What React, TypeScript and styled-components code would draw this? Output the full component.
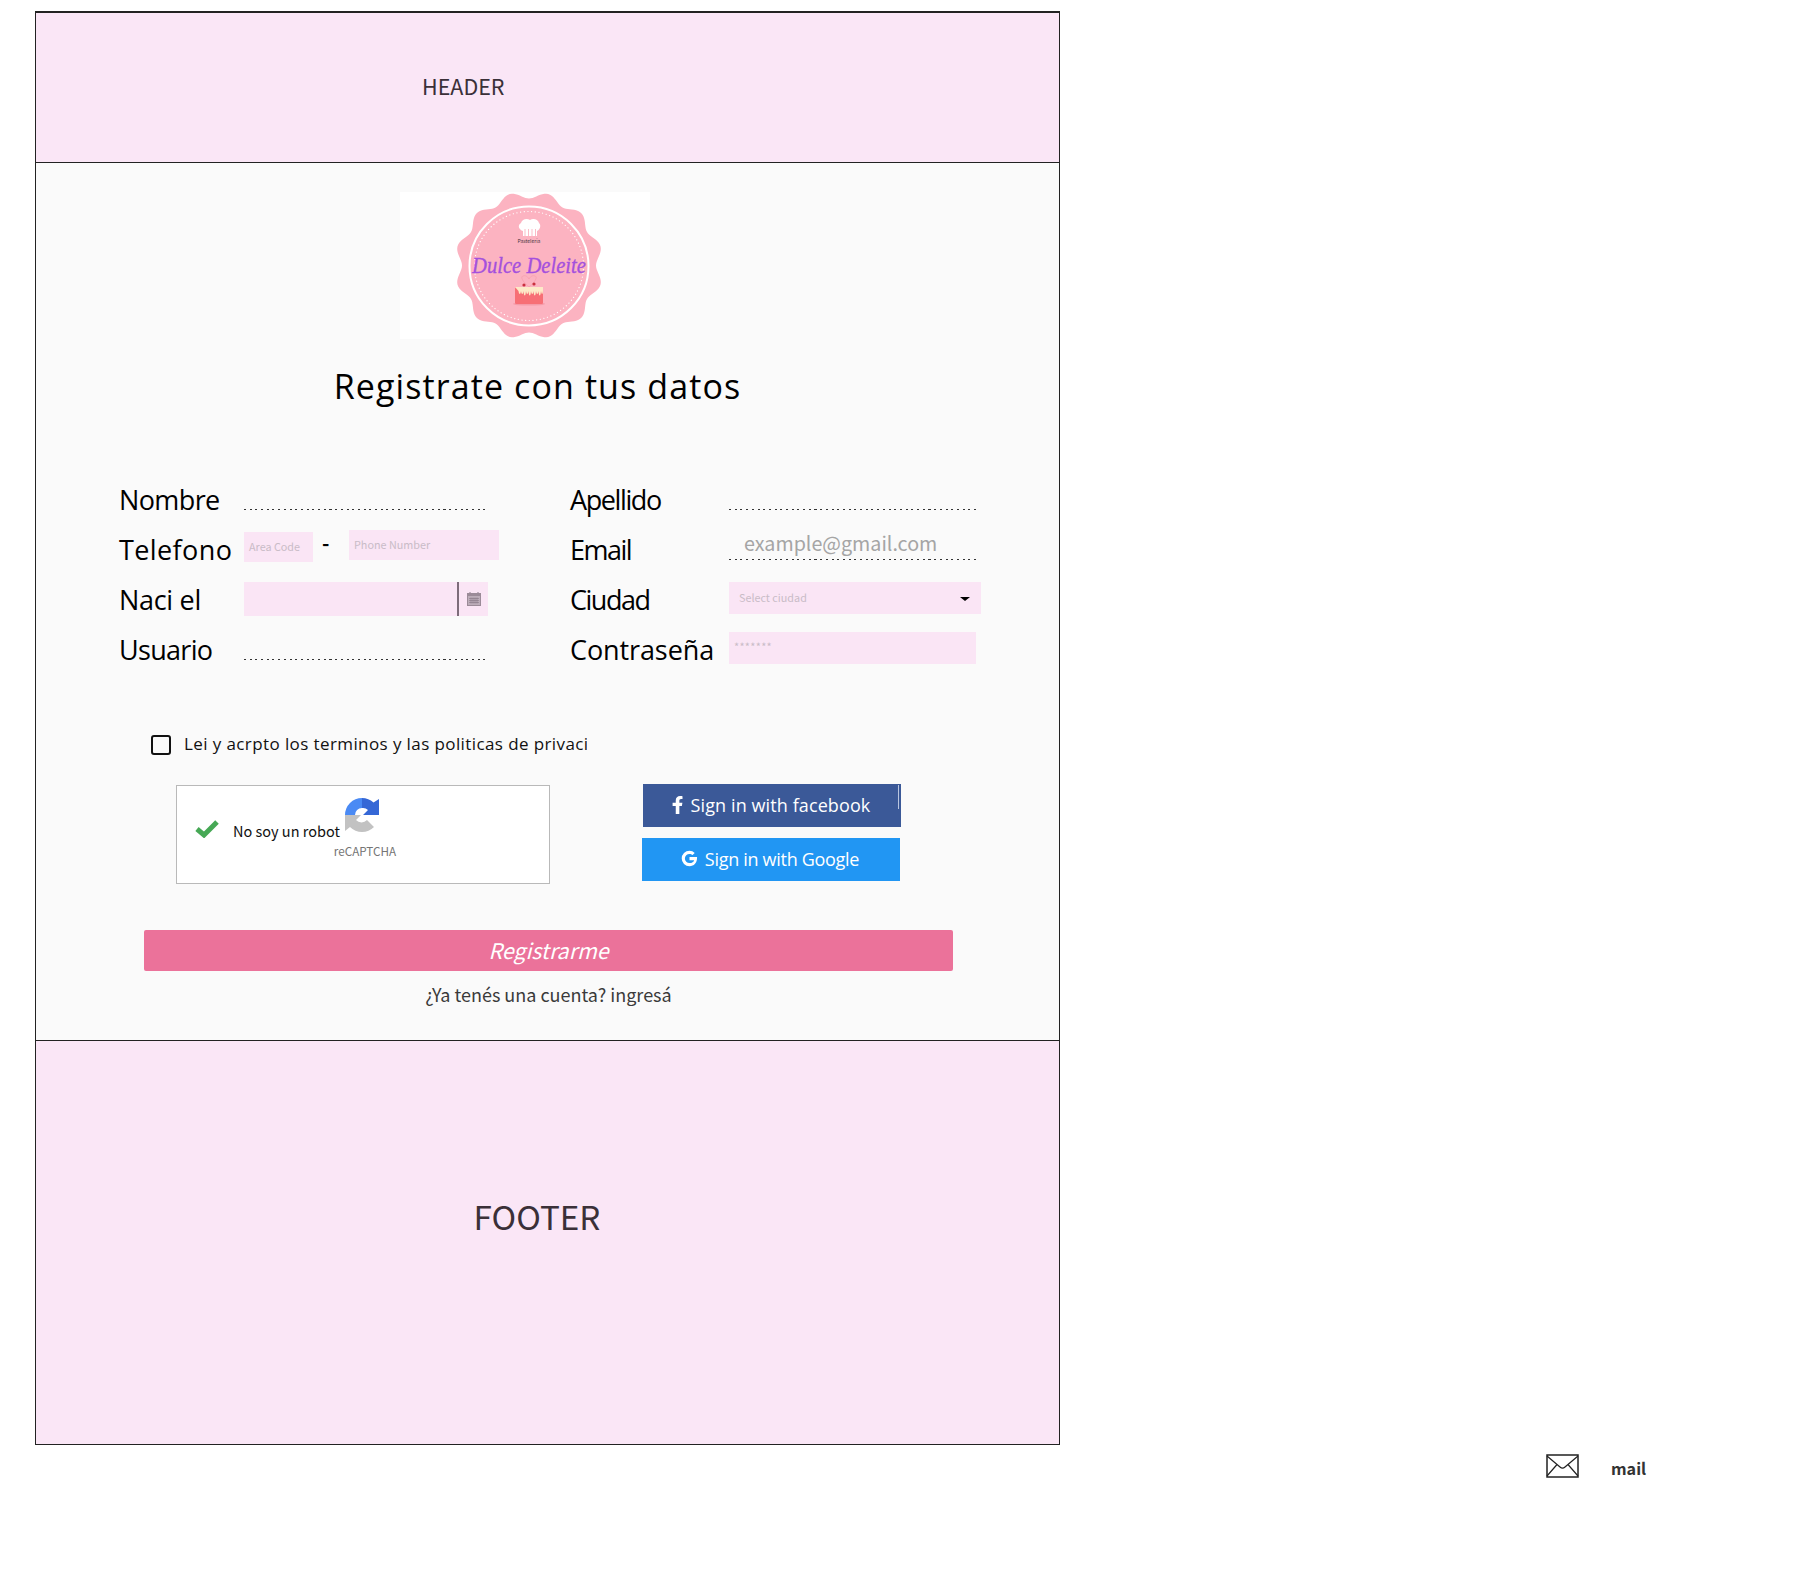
import React from "react";
import styled, { createGlobalStyle } from "styled-components";

const SANS = `"Noto Sans CJK SC", "Noto Sans", sans-serif`;
const HAND = `"Open Sans", "Noto Sans", sans-serif`;

const Global = createGlobalStyle`
  html, body { margin: 0; padding: 0; background: #fff; }
  body { font-family: ${SANS}; color: #333; }
  * { box-sizing: border-box; }
`;

const Page = styled.div`
  width: 1818px;
  height: 1591px;
  padding: 11px 0 0 35px;
  overflow: hidden;
`;

const Frame = styled.div`
  width: 1025px;
  border: 1px solid #222;
  border-top-width: 2px;
`;

const Header = styled.header`
  height: 150px;
  background: #fae6f6;
  border-bottom: 1px solid #222;
  padding: 0 0 4px 386px;
  display: flex;
  align-items: center;
  font-size: 21.5px;
  color: #3a3038;
`;

const Main = styled.main`
  height: 877px;
  background: #fafafa;
  padding-top: 29px;
`;

const Logo = styled.svg`
  display: block;
  width: 250px;
  height: 147px;
  margin-left: 364px;
`;

const Title = styled.h1`
  margin: 24px 0 0;
  font-family: ${HAND};
  font-weight: 400;
  font-size: 34px;
  line-height: 46px;
  width: 1003px;
  text-align: center;
  color: #000;
  letter-spacing: 1.1px;
`;

const FormGrid = styled.div`
  display: grid;
  grid-template-columns: 451px 1fr;
  margin-top: 66px;
  padding-left: 84px;
`;

const FormColumn = styled.div`
  display: flex;
  flex-direction: column;
`;

const Row = styled.div<{ $label: number }>`
  display: grid;
  grid-template-columns: ${(p) => p.$label}px 1fr;
  height: 50px;
  align-items: center;
`;

const Label = styled.label<{ $track?: number }>`
  font-family: ${HAND};
  font-weight: 400;
  font-size: 27px;
  line-height: 34px;
  color: #000;
  white-space: nowrap;
  letter-spacing: ${(p) => p.$track ?? 0}px;
  margin: -1px 0 0 -1px;
`;

const DottedField = styled.div<{ $w: number }>`
  width: ${(p) => p.$w}px;
  height: 30px;
  align-self: start;
  margin-top: 5px;
  padding-left: 15px;
  font-size: 19.7px;
  line-height: 25px;
  color: #a5a5a5;
  background-image: repeating-linear-gradient(to right, #333 0 2px, transparent 2px 5.7px);
  background-size: 100% 1px;
  background-position: bottom;
  background-repeat: no-repeat;
`;

const PhoneGroup = styled.div`
  display: flex;
  align-items: flex-start;
  margin-bottom: 9px;
`;

const PinkField = styled.div<{ $w: number; $h: number; $size?: number }>`
  width: ${(p) => p.$w}px;
  height: ${(p) => p.$h}px;
  background: #fae5f5;
  color: #c9bcc7;
  font-size: ${(p) => p.$size ?? 10.8}px;
  display: flex;
  align-items: center;
  padding: 0 0 2px 5px;
  flex: none;
`;

const AreaField = styled(PinkField)`
  margin-top: 2px;
`;

const Dash = styled.span`
  width: 36px;
  padding-left: 9px;
  font-size: 20px;
  font-weight: 700;
  line-height: 26px;
  color: #000;
`;

const DateField = styled(PinkField)`
  padding: 0;
  justify-content: flex-end;
  margin-bottom: 2px;
`;

const CalendarBox = styled.div`
  width: 31px;
  height: 100%;
  border-left: 2px solid #7d6c7a;
  display: flex;
  align-items: center;
  justify-content: center;
`;

const SelectField = styled(PinkField)`
  justify-content: space-between;
  padding: 0 11px 2px 10px;
  margin-bottom: 4px;
`;

const Caret = styled.span`
  width: 0;
  height: 0;
  border-left: 5px solid transparent;
  border-right: 5px solid transparent;
  border-top: 4px solid #000;
  margin-top: 4px;
`;

const PasswordField = styled(PinkField)`
  font-size: 11px;
  align-items: flex-start;
  padding-top: 6px;
  margin-bottom: 4px;
  letter-spacing: 0.3px;
`;

const ConsentRow = styled.div`
  display: flex;
  align-items: flex-start;
  margin: 59px 0 0 115px;
  width: 440px;
`;

const CheckBox = styled.span`
  width: 20px;
  height: 20px;
  border: 2px solid #111;
  border-radius: 3px;
  flex: none;
  margin-top: 1px;
`;

const ConsentText = styled.span`
  width: 403px;
  margin-left: 13px;
  font-family: ${HAND};
  font-weight: 400;
  font-size: 17px;
  line-height: 20px;
  letter-spacing: 0.4px;
  color: #111;
  white-space: nowrap;
  overflow: hidden;
`;

const VerifyRow = styled.div`
  display: flex;
  align-items: flex-start;
  margin: 30px 0 0 140px;
`;

const Captcha = styled.div`
  width: 374px;
  height: 99px;
  background: #fff;
  border: 1px solid #b9b9b9;
  display: flex;
  padding: 12px 0 0 18px;
  flex: none;
`;

const CaptchaCheck = styled.span`
  margin-top: 22px;
  display: flex;
  height: 18px;
`;

const CaptchaText = styled.span`
  margin: 21px 0 0 14px;
  font-size: 14.5px;
  line-height: 24px;
  color: #111;
  white-space: nowrap;
`;

const CaptchaBrand = styled.div`
  display: flex;
  flex-direction: column;
  align-items: center;
  margin-left: 2px;
  width: 40px;
`;

const CaptchaCaption = styled.span`
  margin: 11px 0 0 6px;
  font-size: 11.7px;
  line-height: 16px;
  color: #757575;
  white-space: nowrap;
`;

const SocialColumn = styled.div`
  display: flex;
  flex-direction: column;
  gap: 11px;
  margin-left: 92px;
  margin-top: -1px;
`;

const SocialButton = styled.button<{ $bg: string; $w: number; $shift: number; $track: number; $edge: string }>`
  position: relative;
  width: ${(p) => p.$w}px;
  height: 43px;
  margin-left: ${(p) => p.$shift}px;
  border: 0;
  padding: 0 2px 2px 0;
  background: ${(p) => p.$bg};
  color: #fff;
  display: flex;
  align-items: center;
  justify-content: center;
  gap: 7px;
  font-family: ${HAND};
  font-weight: 400;
  font-size: 18px;
  letter-spacing: ${(p) => p.$track}px;

  &::after {
    content: "";
    position: absolute;
    top: 1px;
    right: 2px;
    width: 1px;
    height: 24px;
    background: ${(p) => p.$edge};
  }
`;

const SubmitButton = styled.button`
  display: block;
  width: 809px;
  height: 41px;
  margin: 46px 0 0 108px;
  border: 0;
  border-radius: 2px;
  padding: 0 0 2px;
  background: #eb729a;
  color: #fff;
  font-family: ${SANS};
  font-style: italic;
  font-size: 21.4px;
`;

const LoginPrompt = styled.p`
  margin: 9px 0 0 108px;
  width: 809px;
  text-align: center;
  font-size: 18px;
  line-height: 28px;
  color: #3a3a3a;
`;

const Footer = styled.footer`
  height: 404px;
  background: #fae6f6;
  border-top: 1px solid #222;
  padding: 149px 21px 0 0;
  width: 100%;
  text-align: center;
  font-size: 33.2px;
  line-height: 52px;
  color: #3a3038;
`;

const MailRow = styled.div`
  display: flex;
  align-items: center;
  margin: 7px 0 0 1511px;
  width: 200px;
`;

const MailLabel = styled.span`
  margin: 4px 0 0 32px;
  font-size: 16.2px;
  font-weight: 700;
  color: #333;
`;

const LogoSmall = styled.text`
  font-family: ${SANS};
  font-size: 5px;
  text-anchor: middle;
  fill: #4a3340;
`;

const LogoScript = styled.text`
  font-family: "Liberation Serif", serif;
  font-style: italic;
  font-size: 24px;
  text-anchor: middle;
  fill: #a450dd;
  stroke: #a450dd;
  stroke-width: 0.35px;
`;

function scallopPath(cx: number, cy: number, lobes: number, r: number, amp: number) {
  const pts: string[] = [];
  const n = 240;
  for (let i = 0; i < n; i++) {
    const t = (i / n) * Math.PI * 2;
    const rr = r + amp * Math.cos(lobes * (t + Math.PI / 2 + Math.PI / lobes));
    pts.push(`${(cx + rr * Math.cos(t)).toFixed(2)} ${(cy + rr * Math.sin(t)).toFixed(2)}`);
  }
  return `M${pts.join("L")}Z`;
}

const BrandLogo = () => (
  <Logo viewBox="0 0 250 147" role="img" aria-label="Dulce Deleite">
    <rect width="250" height="147" fill="#fff" />
    <path d={scallopPath(129, 73.5, 12, 70.5, 3.5)} fill="#fcb3c1" />
    <circle cx="129" cy="74" r="59.500" fill="none" stroke="#fff" strokeWidth="2" />
    <circle cx="129" cy="74" r="54.500" fill="none" stroke="#fff" strokeWidth="1.200" strokeLinecap="round" strokeDasharray="0.1 3.6" />
    <path d="M123 39c-4-1-6-6-2-8 1-4 6-5 9-3 3-2 8-1 9 3 2.500 2 1 7-2 8v5h-14z" fill="#fff" />
    <path d="M125 37v7M128.500 37v7M132 37v7M135.500 37v7" stroke="#fcb3c1" strokeWidth=".9" />
    <LogoSmall x="129" y="51">Pasteleria</LogoSmall>
    <LogoScript x="129" y="81" textLength="114" lengthAdjust="spacingAndGlyphs">Dulce Deleite</LogoScript>
    <path d="M129 95c-6-5-9-10-6-11s5 1 6 3c1-2 3-4 6-3s0 6-6 11z" fill="none" stroke="#f59aa8" strokeWidth=".6" />
    <ellipse cx="129" cy="112" rx="16" ry="1.600" fill="#f59aa8" />
    <rect x="115" y="95" width="28" height="17" rx="1.500" fill="#f76f76" />
    <path d="M115 95h28v3c0 5-1.500 5-2 1-.6 6-2 6-2.500 0-.5 4-2 4-2.500 0-.5 6-2 6-2.500 0-.5 4-2 4-2.500 0-.5 6-2 6-2.500 0-.5 4-2 4-2.500 0-.5 6-2 6-2.500 0-.5 4-2 4-2.500 0-.5 4-2 4-2.500 0z" fill="#fde9c8" />
    <circle cx="124" cy="93" r="1.600" fill="#c9303e" />
    <circle cx="134" cy="92" r="1.600" fill="#c9303e" />
  </Logo>
);

const CalendarIcon = () => (
  <svg width="14" height="14" viewBox="0 0 14 14" aria-hidden="true">
    <rect x="0.500" y="1.500" width="13" height="12" fill="#bcadb9" stroke="#9b8b98" />
    <rect x="0" y="1" width="14" height="3" fill="#9b8b98" />
    <path d="M3 0v3M11 0v3" stroke="#9b8b98" strokeWidth="1.200" />
    <path d="M2 6.500h10M2 8.500h10M2 10.500h10M4 5.500v6M6 5.500v6M8 5.500v6M10 5.500v6" stroke="#7f6f7c" strokeWidth=".5" />
  </svg>
);

const RecaptchaIcon = () => (
  <svg width="34" height="34" viewBox="0 0 34 34" aria-hidden="true">
    <path d="M0 17A17 17 0 0 1 17 0V10A7 7 0 0 0 10 17Z" fill="#4a8af4" />
    <path d="M17 0A17 17 0 0 1 28.500 4.500L34 1V17H18L23 12A7 7 0 0 0 17 10Z" fill="#3567d6" />
    <path d="M0 17H16L11 22A7.500 7.500 0 0 0 22 22L29 29A17 17 0 0 1 5 29L0 33Z" fill="#c2c2c2" />
  </svg>
);

const GoogleIcon = () => (
  <svg width="17" height="17" viewBox="0 0 24 24" aria-hidden="true">
    <path d="M12 10v4.400h6.600c-.7 2.500-3 4.100-6.600 4.100a6.500 6.500 0 0 1 0-13c1.800 0 3.200.7 4.300 1.700l3.100-3.100A10.800 10.800 0 0 0 12 1a11 11 0 1 0 0 22c6.300 0 11-4.500 10.700-13z" fill="#fff" />
  </svg>
);

const FacebookIcon = () => (
  <svg width="12" height="18" viewBox="0 0 12 20" aria-hidden="true">
    <path d="M3.500 20v-9H0V7.500h3.500V5c0-3.300 2-5 4.800-5 1.300 0 2.700.2 2.700.2V3.200H9.500C8 3.200 7.500 4 7.500 5v2.500h3.400L10.300 11H7.500v9z" fill="#fff" />
  </svg>
);

const MailIcon = () => (
  <svg width="33" height="24" viewBox="0 0 33 24" aria-hidden="true">
    <rect x="1" y="1" width="31" height="22" fill="none" stroke="#222" strokeWidth="1.500" />
    <path d="M1 2l13 11c1.500 1.300 3.500 1.300 5 0L32 2M1 22l10-11.500M32 22L22 10.500" fill="none" stroke="#222" strokeWidth="1.200" />
  </svg>
);

const GreenCheck = () => (
  <svg width="24" height="18" viewBox="0 0 24 18" aria-hidden="true">
    <path d="M2 9l7 6L22 2" fill="none" stroke="#46a855" strokeWidth="5" />
  </svg>
);

export default function App() {
  return (
    <Page>
      <Global />
      <Frame>
        <Header>HEADER</Header>
        <Main>
          <BrandLogo />
          <Title>Registrate con tus datos</Title>
          <FormGrid>
            <FormColumn>
              <Row $label={124}>
                <Label $track={-0.6}>Nombre</Label>
                <DottedField $w={244} />
              </Row>
              <Row $label={124}>
                <Label $track={0.4}>Telefono</Label>
                <PhoneGroup>
                  <AreaField $w={69} $h={30}>Area Code</AreaField>
                  <Dash>-</Dash>
                  <PinkField $w={150} $h={30}>Phone Number</PinkField>
                </PhoneGroup>
              </Row>
              <Row $label={124}>
                <Label $track={-0.3}>Naci el</Label>
                <DateField $w={244} $h={34}>
                  <CalendarBox>
                    <CalendarIcon />
                  </CalendarBox>
                </DateField>
              </Row>
              <Row $label={124}>
                <Label $track={-0.7}>Usuario</Label>
                <DottedField $w={244} />
              </Row>
            </FormColumn>
            <FormColumn>
              <Row $label={158}>
                <Label $track={-1.4}>Apellido</Label>
                <DottedField $w={250} />
              </Row>
              <Row $label={158}>
                <Label $track={-1.5}>Email</Label>
                <DottedField $w={250}>example@gmail.com</DottedField>
              </Row>
              <Row $label={158}>
                <Label $track={-1.5}>Ciudad</Label>
                <SelectField $w={252} $h={32}>
                  Select ciudad
                  <Caret />
                </SelectField>
              </Row>
              <Row $label={158}>
                <Label $track={-0.1}>Contraseña</Label>
                <PasswordField $w={247} $h={32}>*******</PasswordField>
              </Row>
            </FormColumn>
          </FormGrid>
          <ConsentRow>
            <CheckBox />
            <ConsentText>Lei y acrpto los terminos y las politicas de privacidad</ConsentText>
          </ConsentRow>
          <VerifyRow>
            <Captcha>
              <CaptchaCheck>
                <GreenCheck />
              </CaptchaCheck>
              <CaptchaText>No soy un robot</CaptchaText>
              <CaptchaBrand>
                <RecaptchaIcon />
                <CaptchaCaption>reCAPTCHA</CaptchaCaption>
              </CaptchaBrand>
            </Captcha>
            <SocialColumn>
              <SocialButton $bg="#3b5998" $w={258} $shift={1} $track={0.1} $edge="#b9c6e0">
                <FacebookIcon />
                Sign in with facebook
              </SocialButton>
              <SocialButton $bg="#2196f3" $w={258} $shift={0} $track={-0.3} $edge="transparent">
                <GoogleIcon />
                Sign in with Google
              </SocialButton>
            </SocialColumn>
          </VerifyRow>
          <SubmitButton>Registrarme</SubmitButton>
          <LoginPrompt>¿Ya tenés una cuenta? ingresá</LoginPrompt>
        </Main>
        <Footer>FOOTER</Footer>
      </Frame>
      <MailRow>
        <MailIcon />
        <MailLabel>mail</MailLabel>
      </MailRow>
    </Page>
  );
}
